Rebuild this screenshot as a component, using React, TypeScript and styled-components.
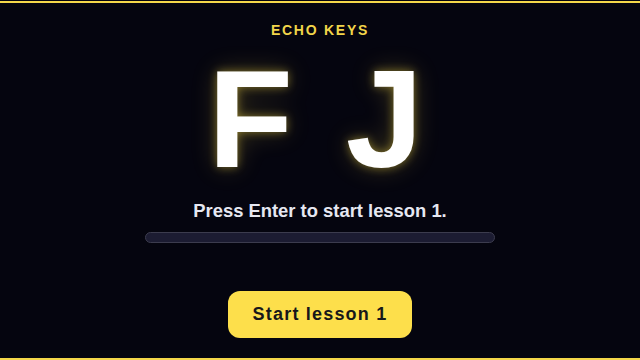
import React from "react";
import styled, { createGlobalStyle } from "styled-components";

const Global = createGlobalStyle`
  html, body { margin: 0; padding: 0; background: #05050f; }
  body { font-family: "Liberation Sans", Arial, sans-serif; }
  * { box-sizing: border-box; }
`;

const Frame = styled.div`
  margin-top: 1px;
  height: 359px;
  border-top: 2px solid #f5d84a;
  border-bottom: 2px solid #f5d84a;
  background: #05050f;
  display: flex;
  flex-direction: column;
  align-items: center;
  padding-top: 19px;
`;

const Title = styled.div`
  font-size: 14px;
  line-height: 16px;
  font-weight: 700;
  letter-spacing: 1.75px;
  color: #f2d54a;
`;

const Keys = styled.div`
  margin-top: 11px;
  display: flex;
  gap: 53px;
  padding-right: 9px;
  height: 140px;
`;

const Key = styled.span`
  font-size: 139px;
  line-height: 140px;
  font-weight: 700;
  color: #ffffff;
  text-shadow: 0 0 10px rgba(253, 224, 71, 0.45), 0 0 26px rgba(253, 224, 71, 0.22);
`;

const Prompt = styled.div`
  margin-top: 11px;
  font-size: 18.4px;
  line-height: 22px;
  font-weight: 700;
  color: #e6e8f2;
`;

const Track = styled.div`
  margin-top: 10px;
  width: 350px;
  height: 11px;
  border-radius: 6px;
  background: #1c1c32;
  border: 1px solid #3c3c4e;
`;

const StartButton = styled.button`
  margin-top: 48px;
  width: 184px;
  height: 47px;
  border: none;
  border-radius: 12px;
  background: #fddf4b;
  color: #17171a;
  font-family: "Liberation Sans", Arial, sans-serif;
  font-size: 18px;
  font-weight: 700;
  letter-spacing: 1.2px;
  cursor: pointer;
`;

export default function App() {
  return (
    <>
      <Global />
      <Frame>
        <Title>ECHO KEYS</Title>
        <Keys>
          <Key>F</Key>
          <Key>J</Key>
        </Keys>
        <Prompt>Press Enter to start lesson 1.</Prompt>
        <Track />
        <StartButton>Start lesson 1</StartButton>
      </Frame>
    </>
  );
}
